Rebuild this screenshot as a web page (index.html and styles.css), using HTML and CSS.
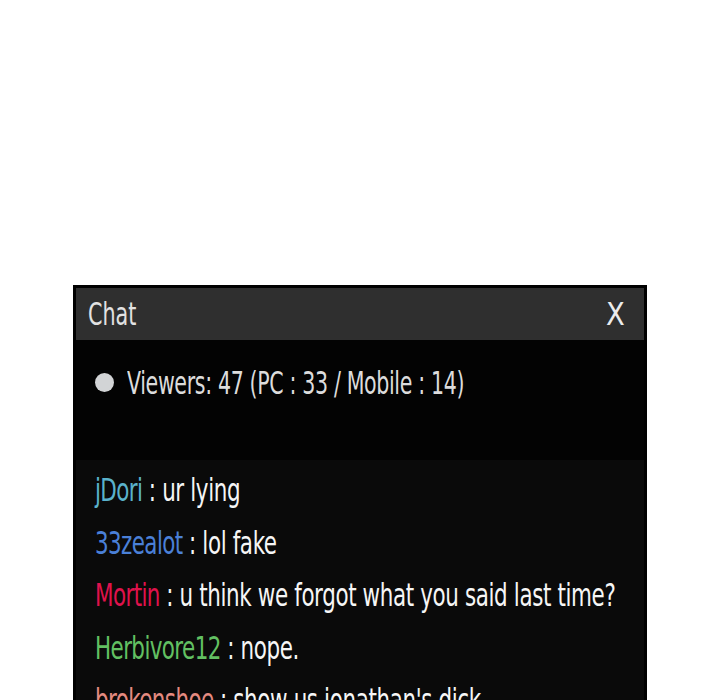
FILE: index.html
```html
<!DOCTYPE html>
<html>
<head>
<meta charset="utf-8">
<link rel="stylesheet" href="styles.css">
</head>
<body>
<div class="window">
  <div class="titlebar">
    <span class="title">Chat</span>
    <span class="close">X</span>
  </div>
  <div class="viewers">
    <span class="dot"></span>
    <span class="vtext">Viewers: 47 (PC : 33 / Mobile : 14)</span>
  </div>
  <div class="messages">
    <div class="msg"><span class="user u1">jDori</span> : ur lying</div>
    <div class="msg"><span class="user u2">33zealot</span> : lol fake</div>
    <div class="msg"><span class="user u3">Mortin</span> : u think we forgot what you said last time?</div>
    <div class="msg"><span class="user u4">Herbivore12</span> : nope.</div>
    <div class="msg"><span class="user u5">brokenshoe</span> : show us jonathan's dick</div>
  </div>
</div>
</body>
</html>
```

FILE: styles.css
```css
html, body {
  margin: 0;
  padding: 0;
  background: #ffffff;
  height: 700px;
  overflow: hidden;
}
body {
  font-family: "DejaVu Sans", "Liberation Sans", sans-serif;
  font-stretch: condensed;
}
.window {
  margin: 285px 0 0 73px;
  width: 568px;
  border: 3px solid #000;
  border-bottom: none;
  background: #080808;
  overflow: hidden;
}
.titlebar {
  height: 52px;
  background: #2f2f2f;
  display: flex;
  align-items: center;
  justify-content: space-between;
  padding: 0 19px 0 12px;
}
.title {
  display: inline-block;
  color: #e2e2e2;
  font-size: 32px;
  transform: scaleX(0.72);
  transform-origin: left center;
}
.close {
  color: #ececec;
  font-size: 32px;
  display: inline-block;
  transform: scaleX(0.95);
  transform-origin: right center;
}
.viewers {
  background: #030303;
  height: 120px;
  display: flex;
  align-items: flex-start;
  padding: 24px 0 0 19px;
  box-sizing: border-box;
  gap: 13px;
}
.dot {
  flex: none;
  width: 19px;
  height: 19px;
  border-radius: 50%;
  background: #d2d4d6;
  margin-top: 9px;
}
.vtext {
  display: inline-block;
  white-space: nowrap;
  color: #dcdcdc;
  font-size: 32px;
  letter-spacing: -0.5px;
  transform: scaleX(0.715);
  transform-origin: left center;
}
.messages {
  padding: 4px 0 0 19px;
  background: #0a0a0a;
}
.msg {
  color: #f6f6f6;
  font-size: 32px;
  line-height: 52.5px;
  letter-spacing: -0.5px;
  white-space: nowrap;
  transform: scaleX(0.745);
  transform-origin: left center;
}
.user { letter-spacing: -0.8px; }
.u1 { color: #5ab2cc; }
.u2 { color: #4a80d8; }
.u3 { color: #e0124c; }
.u4 { color: #62c062; }
.u5 { color: #e58a80; }
```
